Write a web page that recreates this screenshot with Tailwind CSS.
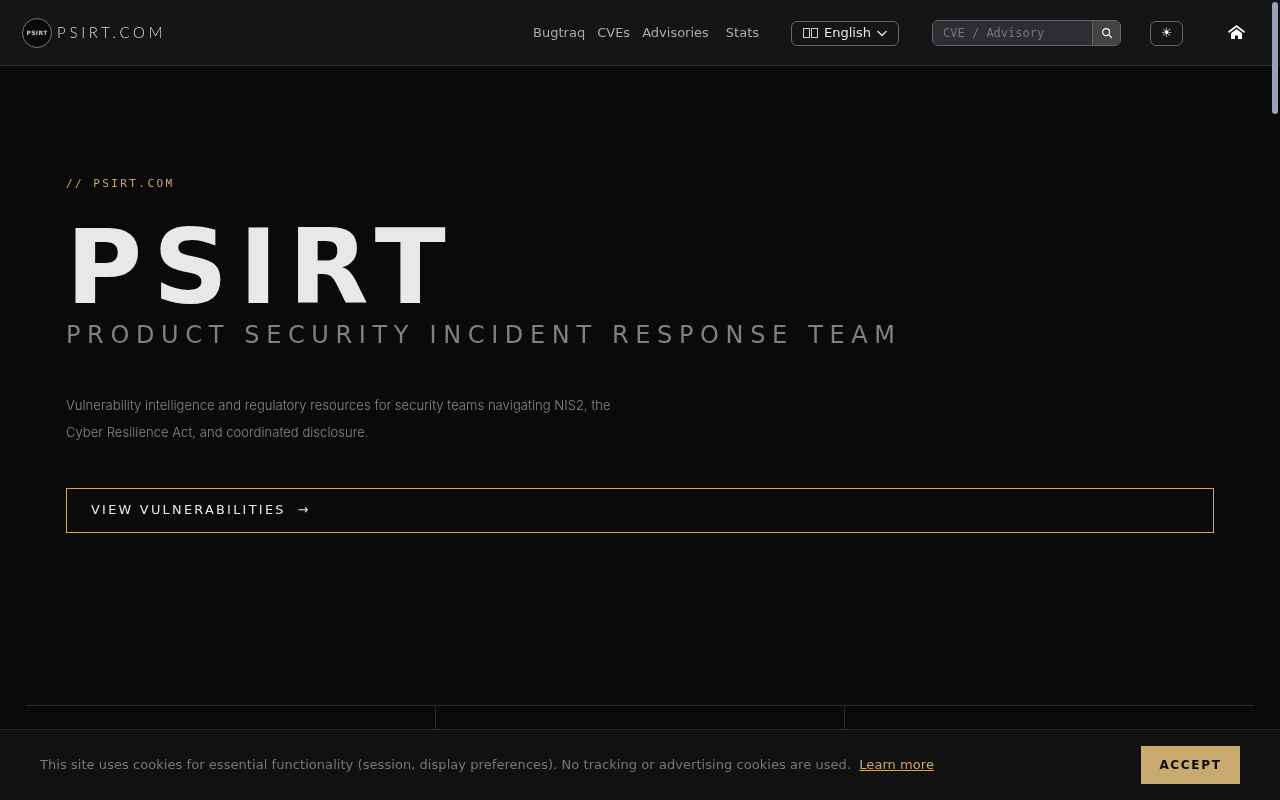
<!DOCTYPE html>
<html lang="en">

<head>
  <meta charset="UTF-8">
  <meta name="viewport" content="width=device-width, initial-scale=1.0">
  <script src="https://cdn.jsdelivr.net/npm/@tailwindcss/browser@4"></script>
  <title>PSIRT.COM</title>
</head>

<body class="bg-[#0a0a0a] font-['DejaVu_Sans',sans-serif]">
  <div class="relative h-screen overflow-hidden will-change-transform">

    <!-- Top nav -->
    <header class="flex items-center h-[66px] pl-[22px] bg-[#151518] border-b border-[#2a2a2a]">
      <a href="#" class="flex items-center gap-[5px]">
        <span class="flex items-center justify-center w-[30px] h-[30px] rounded-full bg-[#080808] border border-[#777] text-[6px] font-bold tracking-[0.06em] text-[#ccc]">PSIRT</span>
        <span class="font-['Lato',sans-serif] font-light text-[15px] tracking-[0.25em] text-[#ddd]">PSIRT.COM</span>
      </a>

      <nav class="flex items-center ml-[367px] text-[13px] text-[#aaa]">
        <a href="#">Bugtraq</a>
        <a href="#" class="ml-[12px]">CVEs</a>
        <a href="#" class="ml-[12px]">Advisories</a>
        <a href="#" class="ml-[17px]">Stats</a>
      </nav>

      <button class="flex items-center ml-[32px] mt-[1px] w-[108px] h-[25px] pl-[11px] border border-[#666] rounded-md text-[13px] text-[#e6e6e6]">
        <span class="flex gap-[1px]">
          <span class="w-[7px] h-[10px] border border-[#ccc]"></span>
          <span class="w-[7px] h-[10px] border border-[#ccc]"></span>
        </span>
        <span class="ml-[6px]">English</span>
        <svg class="ml-[5px] w-[12px] h-[12px]" viewBox="0 0 12 12" fill="none" stroke="#e6e6e6" stroke-width="1.3"><path d="M1.500 4l4.500 4.500L10.500 4" /></svg>
      </button>

      <form class="flex ml-[33px] w-[189px] h-[26px] border border-[#666] rounded-md overflow-hidden">
        <input type="text" placeholder="CVE / Advisory" class="flex-1 min-w-0 px-[10px] bg-[#2e2e32] font-['DejaVu_Sans_Mono',monospace] text-[12px] placeholder-[#777] outline-none" />
        <button type="button" class="flex items-center justify-center w-[28px] bg-[#444] border-l border-[#666]">
          <svg class="w-[12px] h-[12px]" viewBox="0 0 13 13" fill="none" stroke="#fff" stroke-width="1.300"><circle cx="5.500" cy="5.500" r="3.800" /><path d="M8.300 8.300L12 12" /></svg>
        </button>
      </form>

      <button class="flex items-center justify-center ml-[29px] mt-[1px] w-[33px] h-[25px] border border-[#666] rounded-md text-[13px] text-white">☀</button>

      <a href="#" class="ml-[45px] mt-[-2px]">
        <svg class="block w-[17px] h-[14px]" viewBox="0 0 17 14" fill="#fff"><path d="M8.500 0L0 6.500 1 8 8.500 2.300 16 8 17 6.500z" /><path d="M8.500 4L3 8.200V14h4v-3.500h3V14h4V8.200z" /></svg>
      </a>
    </header>

    <!-- Hero -->
    <main class="px-[66px] pt-[111px]">
      <p class="font-['DejaVu_Sans_Mono',monospace] text-[11px] leading-[14px] tracking-[0.22em] text-[#c8a96e]">// PSIRT.COM</p>
      <h1 class="mt-[21px] font-bold text-[104px] leading-[110px] tracking-[10.9px] text-[#e8e8e8]">PSIRT</h1>
      <h2 class="mt-[-3px] text-[24px] leading-[32px] tracking-[6.64px] text-[#808080]">PRODUCT SECURITY INCIDENT RESPONSE TEAM</h2>
      <p class="mt-[41px] w-[560px] font-['Inter',sans-serif] text-[13px] font-light tracking-[0.05px] leading-[27px] text-[#888]">Vulnerability intelligence and regulatory resources for security teams navigating NIS2, the Cyber Resilience Act, and coordinated disclosure.</p>
      <a href="#" class="flex items-center mt-[42px] h-[45px] pl-[24px] pb-[1px] border border-[#c8a96e] text-[12.8px] tracking-[0.18em] text-[#e8e8e8]">
        <span>VIEW VULNERABILITIES</span>
        <span class="ml-[12px]">→</span>
      </a>
    </main>

    <!-- Stats row, cut off by the cookie bar -->
    <section class="grid grid-cols-3 mx-[26px] mt-[172px] h-[60px] border-t border-[#2a2a2a]">
      <div></div>
      <div class="border-x border-[#2a2a2a]"></div>
      <div></div>
    </section>

    <!-- Cookie bar -->
    <div class="absolute left-0 right-0 bottom-0 flex items-center justify-between h-[71px] pl-[40px] pr-[40px] bg-[#111] border-t border-[#2a2a2a]">
      <p class="text-[13px] tracking-[0.055px] text-[#777]">This site uses cookies for essential functionality (session, display preferences). No tracking or advertising cookies are used. <a href="#" class="ml-[4px] text-[#c8a96e] underline">Learn more</a></p>
      <button class="w-[99px] h-[38px] bg-[#c8a96e] text-[12px] font-bold tracking-[0.14em] text-[#0a0a0a]">ACCEPT</button>
    </div>

    <!-- Overlay scrollbar -->
    <div class="absolute top-[2px] right-[2px] w-[6px] h-[112px] rounded-full bg-[#9a9fbb]"></div>
  </div>
</body>

</html>
